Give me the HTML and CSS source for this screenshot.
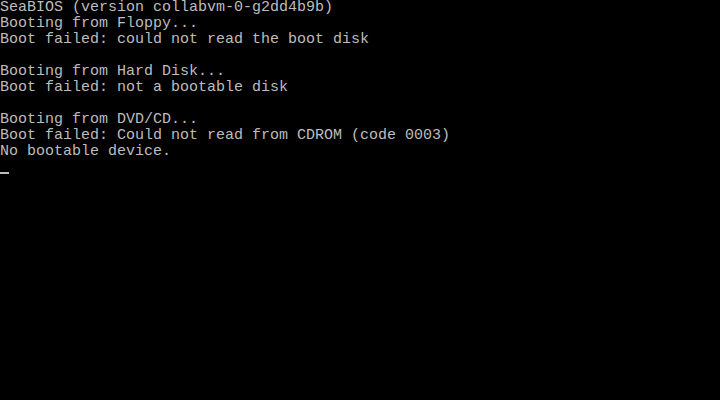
FILE: index.html
```html
<!DOCTYPE html>
<html>
<head>
<meta charset="utf-8">
<link rel="stylesheet" href="styles.css">
</head>
<body>
<pre class="screen">SeaBIOS (version collabvm-0-g2dd4b9b)
Booting from Floppy...
Boot failed: could not read the boot disk

Booting from Hard Disk...
Boot failed: not a bootable disk

Booting from DVD/CD...
Boot failed: Could not read from CDROM (code 0003)
No bootable device.</pre>
<div class="cursor-line"><span class="cursor"></span></div>
</body>
</html>
```
FILE: styles.css
```css
html, body {
  margin: 0;
  padding: 0;
  background: #000;
  width: 720px;
  height: 400px;
  overflow: hidden;
}
.screen {
  margin: 0;
  font-family: "Liberation Mono", "DejaVu Sans Mono", monospace;
  font-size: 15px;
  line-height: 16px;
  color: #bdbdbd;
  white-space: pre;
}
.cursor-line {
  height: 16px;
}
.cursor {
  display: block;
  width: 9px;
  height: 2px;
  margin-top: 12px;
  background: #bdbdbd;
}
```
